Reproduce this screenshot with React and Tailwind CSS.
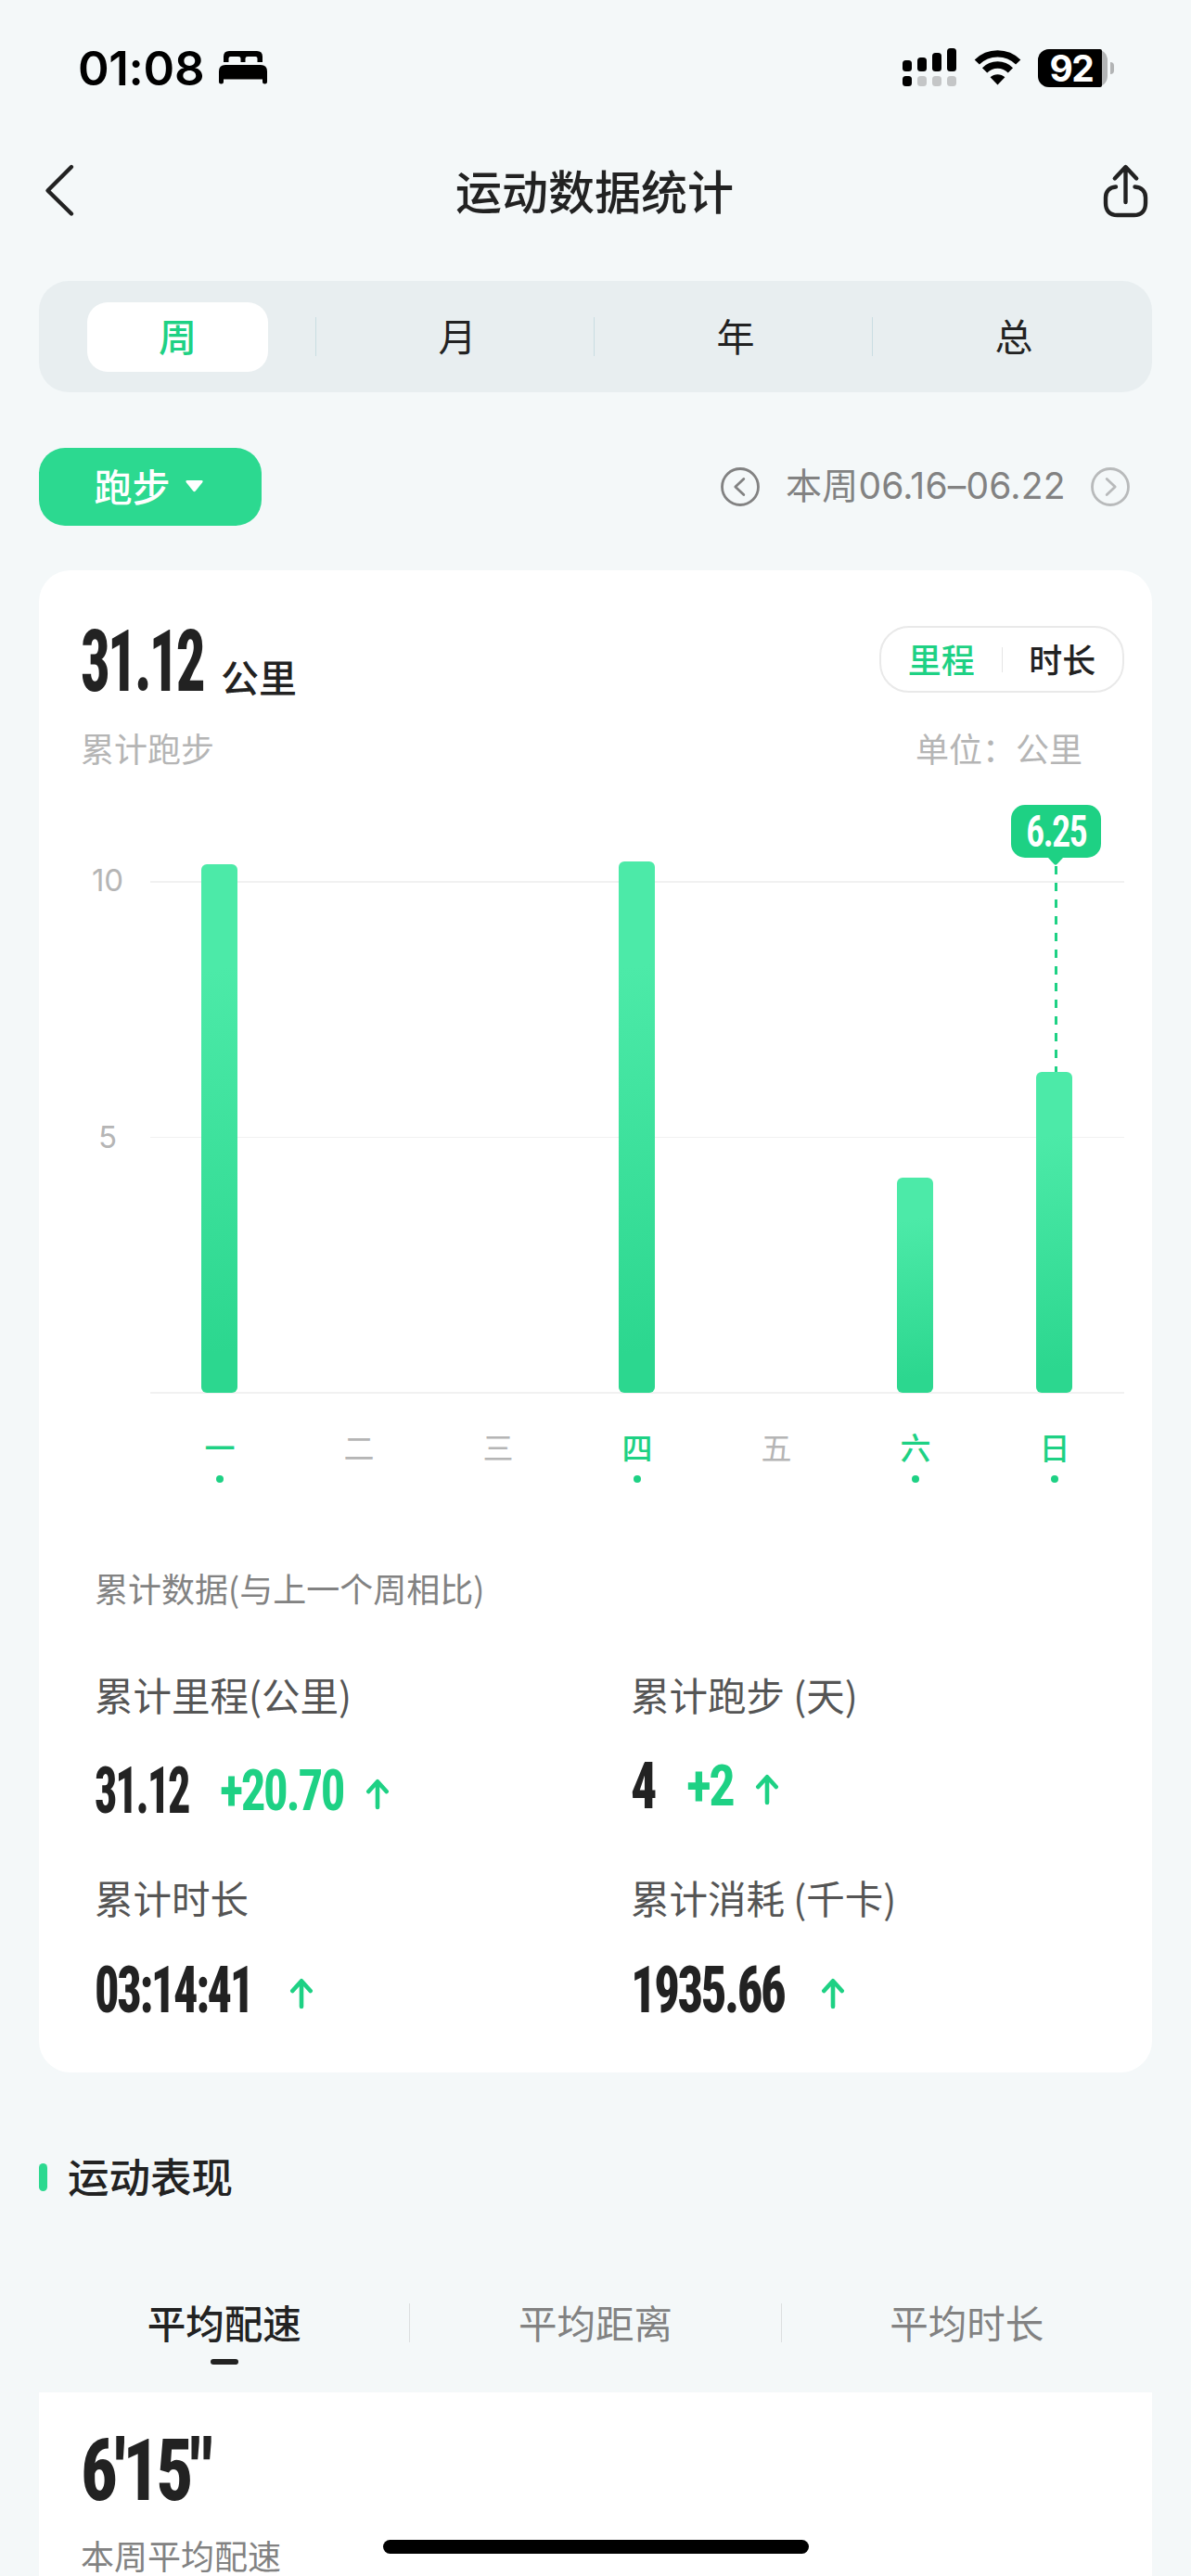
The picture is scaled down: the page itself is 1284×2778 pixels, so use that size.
import { useLayoutEffect, useRef, useState } from 'react';

const periods = ['周', '月', '年', '总'];

const days = [
  { label: '一', height: 570 },
  { label: '二', height: 0 },
  { label: '三', height: 0 },
  { label: '四', height: 573 },
  { label: '五', height: 0 },
  { label: '六', height: 232 },
  { label: '日', height: 346, value: '6.25' },
];

const totals = [
  { label: '累计里程(公里)', value: '31.12', width: 101, diff: '+20.70', diffWidth: 133, gap: 'mt-[57px]' },
  { label: '累计跑步 (天)', value: '4', width: 26, diff: '+2', diffWidth: 50, gap: 'mt-[52px]' },
  { label: '累计时长', value: '03:14:41', width: 170, gap: 'mt-[53px]' },
  { label: '累计消耗 (千卡)', value: '1935.66', width: 165, gap: 'mt-[53px]' },
];

const performanceTabs = ['平均配速', '平均距离', '平均时长'];

// Squeezes bold digits to a fixed width so they read like a condensed face
const CondensedText = ({ width, className, children }) => {
  const ref = useRef(null);
  const [scale, setScale] = useState(1);

  useLayoutEffect(() => {
    setScale(width / ref.current.offsetWidth);
  }, [width]);

  return (
    <span className={`block whitespace-nowrap font-['Roboto',sans-serif] font-stretch-condensed leading-none tracking-[-0.045em] ${className}`} style={{ width }}>
      <span ref={ref} className="inline-block origin-left" style={{ transform: `scaleX(${scale})` }}>{children}</span>
    </span>
  );
};

const UpArrow = () => (
  <svg className="w-[26px] h-[34px]" viewBox="0 0 26 34" fill="none" stroke="#1ed184" strokeWidth="4.6" strokeLinecap="round" strokeLinejoin="round">
    <path d="M13 31V3.5M3.3 14L13 3.2L22.7 14" />
  </svg>
);

const StatusBar = () => (
  <div className="h-[146px] flex items-center justify-between pl-[84px] pr-[83px]">
    <div className="flex items-center gap-[16px]">
      <span className="font-['Inter',sans-serif] text-[51px] font-semibold leading-none text-black tracking-[-0.3px]">01:08</span>
      <svg className="w-[52px] h-[36px]" viewBox="0 0 52 36" fill="#000">
        <path d="M5 12V6Q5 0 11 0H41Q47 0 47 6V12H41.500V8Q41.500 6 39.500 6H31Q28.500 6 28.500 8V12H23.500V8Q23.500 6 21 6H12.500Q10.500 6 10.500 8V12Z" />
        <path d="M0 22Q0 15 7 15H45Q52 15 52 22V33Q52 35.500 49.500 35.500Q47 35.500 47 33V30.500H5V33Q5 35.500 2.500 35.500Q0 35.500 0 33Z" />
      </svg>
    </div>
    <div className="flex items-center gap-[18px]">
      <svg className="w-[59px] h-[42px]" viewBox="0 0 59 42">
        <rect x="0" y="13" width="10" height="12" rx="3.500" />
        <rect x="16" y="10" width="10" height="15" rx="3.500" />
        <rect x="32" y="5" width="10" height="20" rx="3.500" />
        <rect x="48" y="0" width="10" height="25" rx="3.500" />
        <rect x="0" y="30" width="10" height="11" rx="3.500" />
        <rect x="16" y="30" width="10" height="11" rx="3.500" fill="#c4c6c7" />
        <rect x="32" y="30" width="10" height="11" rx="3.500" fill="#c4c6c7" />
        <rect x="48" y="30" width="10" height="11" rx="3.500" fill="#c4c6c7" />
      </svg>
      <svg className="w-[51px] h-[38px]" viewBox="0 0 51 38">
        <path d="M3.300 13A31.500 31.500 0 0 1 47.700 13M11.600 21.800A19.500 19.500 0 0 1 39.400 21.800" fill="none" stroke="#000" strokeWidth="7.400" />
        <path d="M25.500 37.500L17.600 29.300A11.500 11.500 0 0 1 33.400 29.300Z" />
      </svg>
      <div className="flex items-center gap-[3px]">
        <div className="w-[75px] h-[41px] rounded-[12px] flex bg-[#b2b4b5]">
          <div className="w-[69px] rounded-l-[12px] rounded-r-[2px] bg-black flex items-center justify-center">
            <span className="font-['Inter',sans-serif] text-[39px] font-bold leading-[41px] text-white pl-[3px] tracking-[-1.5px]">92</span>
          </div>
        </div>
        <div className="w-[4px] h-[13px] rounded-r-full bg-[#b2b4b5]"></div>
      </div>
    </div>
  </div>
);

const NavBar = () => (
  <div className="h-[122px] flex items-center justify-between pl-[47px] pr-[46px]">
    <svg className="w-[36px] h-[58px] mb-[4px]" viewBox="0 0 36 58" fill="none" stroke="#222" strokeWidth="4.400" strokeLinecap="round" strokeLinejoin="round">
      <path d="M30 4L4.500 29.500L30 54.500" />
    </svg>
    <h1 className="ml-[11px] mb-[6px] text-[50px] leading-none font-medium text-[#222]">运动数据统计</h1>
    <svg className="w-[50px] h-[60px] mb-[2px]" viewBox="0 0 50 60" fill="none" stroke="#222" strokeWidth="4.400" strokeLinecap="round" strokeLinejoin="round">
      <path d="M25.500 42V4.500M13.800 16.500L25.500 4L37.200 16.500" />
      <path d="M15 25.500C8 26 4 30.500 4 37V43C4 51.500 8.500 56 16.500 56H34.500C42.500 56 47 51.500 47 43V37C47 30.500 43 26 35.500 25.500" />
    </svg>
  </div>
);

const PeriodTabs = () => {
  const [active, setActive] = useState('周');
  return (
    <div className="mx-[42px] mt-[35px] h-[120px] rounded-[32px] bg-[#e8eef0] flex items-center">
      {periods.map((period, index) => (
        <div key={period} className="flex-1 flex items-center h-[42px] relative">
          {index > 0 && <div className="absolute left-[-2px] w-px h-[42px] bg-[#c9dde2]"></div>}
          <button
            onClick={() => setActive(period)}
            className={`mx-auto w-[195px] h-[75px] pb-[4px] rounded-[22px] text-[41px] leading-none ${active === period ? 'mr-[53px] bg-white text-[#1ed184] font-medium' : 'text-[#222] pl-[2px]'}`}
          >
            {period}
          </button>
        </div>
      ))}
    </div>
  );
};

const FilterRow = () => (
  <div className="mx-[42px] mt-[60px] h-[84px] flex items-center justify-between">
    <button className="w-[240px] h-[84px] pr-[4px] rounded-[28px] bg-[#2cd990] flex items-center justify-center gap-[16px] text-white text-[41px] leading-none font-medium">
      <span className="mb-[4px]">跑步</span>
      <svg className="w-[19px] h-[13px] mb-[2px]" viewBox="0 0 19 13" fill="#fff">
        <path d="M1.500 0H17.500Q19.500 0.500 18.200 2.200L11 11.300Q9.500 13 8 11.300L0.800 2.200Q-0.500 0.500 1.500 0Z" />
      </svg>
    </button>
    <div className="flex items-center pr-[24px] gap-[28px]">
      <svg className="w-[42px] h-[42px]" viewBox="0 0 42 42" fill="none" stroke="#828282" strokeWidth="2.800" strokeLinecap="round" strokeLinejoin="round">
        <circle cx="21" cy="21" r="19.500" />
        <path d="M24.800 12.500L15.800 21L24.800 29.500" />
      </svg>
      <span className="w-[301px] mb-[3px] whitespace-nowrap font-['Inter','Noto_Sans_CJK_SC',sans-serif] text-[39px] leading-none tracking-[0.2px] text-[#828282]">本周06.16–06.22</span>
      <svg className="w-[42px] h-[42px]" viewBox="0 0 42 42" fill="none" stroke="#b8babb" strokeWidth="2.800" strokeLinecap="round" strokeLinejoin="round">
        <circle cx="21" cy="21" r="19.500" />
        <path d="M17.200 12.500L26.200 21L17.200 29.500" />
      </svg>
    </div>
  </div>
);

const Chart = () => (
  <div className="mt-[126px] flex">
    <div className="w-[120px] h-[553px] relative font-['Inter',sans-serif] text-[33px] leading-none text-[#b5b5b5]">
      <span className="absolute left-[44px] top-[-17px] w-[60px] text-center">10</span>
      <span className="absolute left-[44px] top-[260px] w-[60px] text-center">5</span>
    </div>
    <div className="w-[1050px]">
      <div className="relative h-[553px] flex flex-col justify-between">
        <div className="h-[2px] bg-[#f1f1f1]"></div>
        <div className="h-px bg-[#f1f1f1]"></div>
        <div className="h-[2px] bg-[#f1f1f1]"></div>
        <div className="absolute top-0 bottom-px -left-px w-full flex items-end">
          {days.map((day) => (
            <div key={day.label} className="relative flex-1 flex justify-center">
              {day.value && (
                <div className="absolute bottom-[346px] left-[27px] w-[100px] flex flex-col items-center">
                  <div className="w-[97px] h-[57px] rounded-[15px] bg-[#1ed184] flex items-center justify-center">
                    <CondensedText width={65} className="text-[49px] font-semibold text-white">{day.value}</CondensedText>
                  </div>
                  <svg className="w-[16px] h-[8px]" viewBox="0 0 16 8" fill="#1ed184">
                    <path d="M0 0H16L9.500 7Q8 8.500 6.500 7Z" />
                  </svg>
                  <svg className="w-[3px] h-[223px]" viewBox="0 0 3 223">
                    <path d="M1.500 1V223" stroke="#1ed184" strokeWidth="3" strokeDasharray="9 9" />
                  </svg>
                </div>
              )}
              <div className="w-[39px] rounded-[6px] bg-linear-[172deg,#2cd78f_8%,#4ceaa8_80%] rotate-180" style={{ height: day.height }}></div>
            </div>
          ))}
        </div>
      </div>
      <div className="flex mt-[40px]">
        {days.map((day) => (
          <div key={day.label} className="flex-1 flex flex-col items-center">
            <span className={`text-[33px] leading-[34px] ${day.height ? 'text-[#1ed184] font-medium' : 'text-[#b5b5b5]'}`}>{day.label}</span>
            <span className={`mt-[14px] w-[8px] h-[8px] rounded-full ${day.height ? 'bg-[#1ed184]' : ''}`}></span>
          </div>
        ))}
      </div>
    </div>
  </div>
);

const DistanceCard = () => (
  <div className="mx-[42px] mt-[48px] h-[1620px] rounded-[34px] bg-white pt-[60px]">
    <div className="h-[76px] flex justify-between pl-[45px] pr-[30px]">
      <div className="flex items-end gap-[19px]">
        <CondensedText width={132} className="mb-[-9px] text-[93px] font-extrabold text-[#222]">31.12</CondensedText>
        <span className="mb-[1px] text-[41px] leading-none font-medium text-[#222]">公里</span>
      </div>
      <div className="w-[264px] h-[72px] rounded-[32px] border-2 border-[#e9e9e9] flex items-center text-[36px] leading-none font-medium">
        <button className="flex-1 pb-[3px] text-[#1ed184]">里程</button>
        <div className="w-px h-[27px] bg-[#e5e5e5]"></div>
        <button className="flex-1 pb-[3px] text-[#222]">时长</button>
      </div>
    </div>
    <div className="mt-[37px] pl-[45px] pr-[75px] flex justify-between text-[36px] leading-none text-[#b5b5b5]">
      <span>累计跑步</span>
      <span>单位：公里</span>
    </div>
    <Chart />
    <div className="pl-[60px]">
      <p className="mt-[95px] text-[36px] leading-none text-[#828282]">累计数据(与上一个周相比)</p>
      <div className="mt-[77px] grid grid-cols-[578px_1fr]">
        {totals.map((item) => (
          <div key={item.label} className="h-[219px]">
            <p className="text-[41.500px] leading-none text-[#555]">{item.label}</p>
            <div className={`flex items-center h-[50px] ${item.gap}`}>
              <CondensedText width={item.width} className="text-[71px] font-extrabold text-[#222]">{item.value}</CondensedText>
              {item.diff && (
                <CondensedText width={item.diffWidth} className="ml-[34px] text-[62px] font-bold text-[#1ed184]">{item.diff}</CondensedText>
              )}
              <div className={`mt-[8px] ${item.diff ? 'ml-[24px]' : 'ml-[40px]'}`}>
                <UpArrow />
              </div>
            </div>
          </div>
        ))}
      </div>
    </div>
  </div>
);

const Performance = () => (
  <div className="mx-[42px]">
    <div className="mt-[90px] flex items-center h-[46px]">
      <div className="w-[9px] h-[30px] rounded-full bg-[#2cd990]"></div>
      <h2 className="ml-[22px] mb-[4px] text-[44.500px] leading-none font-medium text-[#222]">运动表现</h2>
    </div>
    <div className="mt-[113px] h-[96px] flex">
      {performanceTabs.map((tab, index) => (
        <div key={tab} className={`flex-1 h-[42px] flex flex-col items-center ${index > 0 ? 'border-l border-[#dcdfe0]' : ''}`}>
          <span className={`mt-[-1px] text-[41.500px] leading-[42px] ${index === 0 ? 'font-medium text-[#222]' : 'text-[#828282]'}`}>{tab}</span>
          {index === 0 && <div className="mt-[19px] w-[30px] h-[6px] shrink-0 rounded-full bg-[#222]"></div>}
        </div>
      ))}
    </div>
    <div className="h-[198px] bg-white pl-[45px] pt-[38px]">
      <CondensedText width={139} className="text-[93px] font-extrabold text-[#222]">6'15"</CondensedText>
      <p className="mt-[26px] text-[36px] leading-none text-[#828282]">本周平均配速</p>
    </div>
  </div>
);

const App = () => {
  return (
    <div className="relative w-[1284px] h-[2778px] overflow-hidden bg-[#f4f8f9] font-['Noto_Sans_CJK_SC',sans-serif]">
      <StatusBar />
      <NavBar />
      <PeriodTabs />
      <FilterRow />
      <DistanceCard />
      <Performance />
      <div className="absolute left-[413px] bottom-[24px] w-[459px] h-[15px] rounded-full bg-black"></div>
    </div>
  );
};
export default App;
